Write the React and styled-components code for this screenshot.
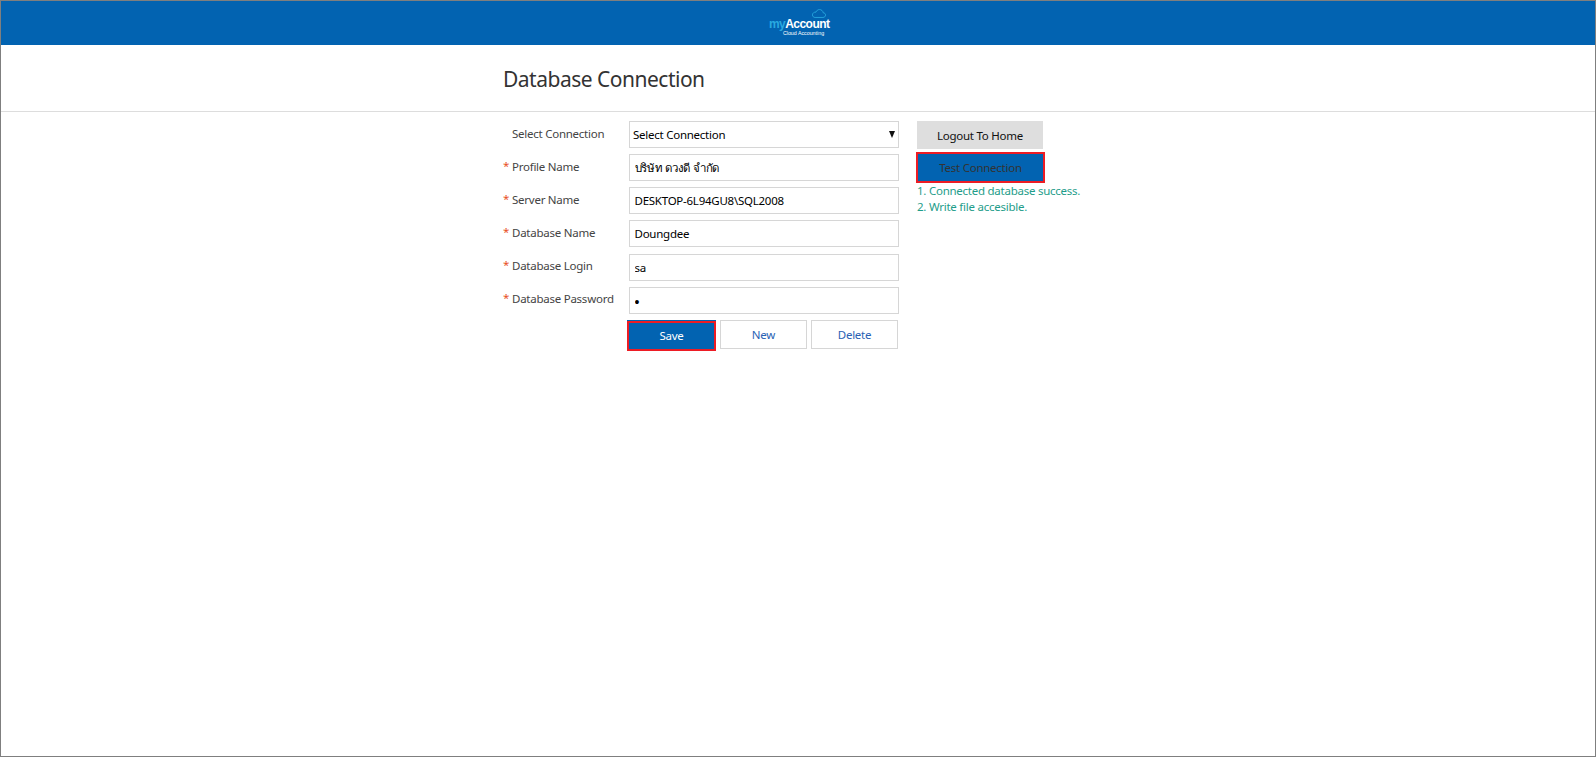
import React from 'react';
import styled, { createGlobalStyle } from 'styled-components';

const GlobalStyle = createGlobalStyle`
    html, body {
        margin: 0;
        padding: 0;
        background: #fff;
    }
    body {
        font-family: "Noto Sans", "Liberation Sans", Tahoma, sans-serif;
    }
`;

const fields = [
    { label: 'Profile Name', value: 'บริษัท ดวงดี จำกัด' },
    { label: 'Server Name', value: 'DESKTOP-6L94GU8\\SQL2008' },
    { label: 'Database Name', value: 'Doungdee' },
    { label: 'Database Login', value: 'sa' },
    { label: 'Database Password', value: 'a', type: 'password' },
];

const Logo = () => (
    <LogoBox>
        <svg width="14" height="9" viewBox="0 0 16 10" fill="none" stroke="#29a9e0" strokeWidth="1">
            <path d="M3.5 9.5H12.5C14.3 9.5 15.5 8.3 15.5 6.8C15.5 5.3 14.3 4.2 12.8 4.2C12.5 2 10.7 0.5 8.6 0.5C6.7 0.5 5.1 1.7 4.6 3.4C2.4 3.2 0.5 4.6 0.5 6.6C0.5 8.3 1.8 9.5 3.5 9.5Z" />
        </svg>
        <LogoName><span>my</span>Account</LogoName>
        <LogoSub>Cloud Accounting</LogoSub>
    </LogoBox>
);

const App = () => {
    return (
        <Frame>
            <GlobalStyle />
            <TopBar>
                <Logo />
            </TopBar>
            <TitleBar>
                <Title>Database Connection</Title>
            </TitleBar>
            <Content>
                <Form>
                    <Row>
                        <Label>Select Connection</Label>
                        <SelectWrap>
                            <Select defaultValue="">
                                <option value="">Select Connection</option>
                            </Select>
                            <Arrow />
                        </SelectWrap>
                    </Row>
                    {fields.map((f) => (
                        <Row key={f.label}>
                            <Label required>{f.label}</Label>
                            <Input type={f.type || 'text'} defaultValue={f.value} />
                        </Row>
                    ))}
                    <Actions>
                        <ActionButton primary marked>Save</ActionButton>
                        <ActionButton>New</ActionButton>
                        <ActionButton>Delete</ActionButton>
                    </Actions>
                </Form>
                <Side>
                    <LogoutButton>Logout To Home</LogoutButton>
                    <TestButton>Test Connection</TestButton>
                    <Messages>
                        <li>1. Connected database success.</li>
                        <li>2. Write file accesible.</li>
                    </Messages>
                </Side>
            </Content>
        </Frame>
    );
};

export default App;

const Frame = styled.div`
    box-sizing: border-box;
    height: 757px;
    border: 1px solid #7f7f7f;
    background: #fff;
    overflow: hidden;
`;

const TopBar = styled.header`
    height: 44px;
    background: #0263b1;
    display: flex;
    justify-content: center;
`;

const LogoBox = styled.div`
    position: relative;
    width: 60px;
    padding-top: 18px;
    margin-left: 2px;
    color: #fff;
    text-align: center;
    svg {
        position: absolute;
        top: 8px;
        right: 3px;
    }
`;

const LogoName = styled.div`
    font-family: "Liberation Sans", Arial, sans-serif;
    font-size: 12px;
    line-height: 11px;
    font-weight: 700;
    letter-spacing: -0.55px;
    white-space: nowrap;
    span {
        color: #29a9e0;
    }
`;

const LogoSub = styled.div`
    font-family: "Liberation Sans", Arial, sans-serif;
    font-size: 5.3px;
    line-height: 7px;
    padding-left: 9px;
    white-space: nowrap;
`;

const TitleBar = styled.div`
    height: 67px;
    box-sizing: border-box;
    border-bottom: 1px solid #dddddd;
    padding: 21px 0 0 502px;
`;

const Title = styled.h1`
    margin: 0;
    font-size: 21px;
    line-height: 26px;
    font-weight: 400;
    letter-spacing: -0.5px;
    color: #333333;
`;

const Content = styled.div`
    display: flex;
    padding: 9px 0 0 502px;
`;

const Form = styled.form`
    width: 396px;
    display: flex;
    flex-direction: column;
    gap: 6.15px;
`;

const Row = styled.div`
    display: flex;
    align-items: center;
    height: 27px;
`;

const Label = styled.label`
    position: relative;
    width: 126px;
    flex: none;
    box-sizing: border-box;
    padding: 0 0 3px 9px;
    font-size: 11.5px;
    letter-spacing: -0.25px;
    color: #444444;
    white-space: nowrap;
    &::before {
        content: ${(p) => (p.required ? '"*"' : 'none')};
        position: absolute;
        left: 0;
        top: -1px;
        color: #e8501f;
    }
`;

const fieldBox = `
    box-sizing: border-box;
    width: 270px;
    height: 27px;
    border: 1px solid #d6d6d6;
    background: #fff;
    outline: none;
    font-family: "Noto Sans", "Liberation Sans", Tahoma, sans-serif;
    font-size: 11.5px;
    letter-spacing: -0.25px;
    color: #000;
`;

const Input = styled.input`
    ${fieldBox}
    padding: 0 4.5px;
    &[type='password'] {
        padding-top: 3px;
        font-family: "Liberation Sans", Arial, sans-serif;
        font-size: 14px;
    }
`;

const SelectWrap = styled.div`
    position: relative;
    width: 270px;
    height: 27px;
`;

const Select = styled.select`
    ${fieldBox}
    appearance: none;
    padding: 0 3px;
    border-radius: 0;
`;

const Arrow = styled.span`
    position: absolute;
    right: 4px;
    top: 10px;
    width: 0;
    height: 0;
    border-left: 3.5px solid transparent;
    border-right: 3.5px solid transparent;
    border-top: 7px solid #111;
`;

const Actions = styled.div`
    display: flex;
    gap: 4px;
    margin-left: 124px;
    height: 31px;
`;

const ActionButton = styled.button.attrs({ type: 'button' })`
    box-sizing: border-box;
    width: ${(p) => (p.marked ? '89px' : '87px')};
    height: ${(p) => (p.marked ? '30px' : '29px')};
    margin-top: ${(p) => (p.marked ? '1px' : '0')};
    padding: 0;
    border: ${(p) => (p.marked ? '2px solid #ed1c24' : '1px solid #d6d6d6')};
    border-radius: 0;
    box-shadow: ${(p) => (p.marked ? '0 -1px 0 #0263b1' : 'none')};
    background: ${(p) => (p.primary ? '#0263b1' : '#fff')};
    color: ${(p) => (p.primary ? '#fff' : '#2a62b4')};
    font-family: inherit;
    font-size: 11.5px;
    letter-spacing: -0.25px;
    font-weight: 400;
`;

const Side = styled.div`
    margin-left: 18px;
    width: 180px;
    display: flex;
    flex-direction: column;
    align-items: flex-start;
`;

const LogoutButton = styled.button.attrs({ type: 'button' })`
    width: 126px;
    height: 28px;
    padding: 0;
    border: 0;
    background: #dedede;
    color: #111;
    font-family: inherit;
    font-size: 11.5px;
    letter-spacing: -0.25px;
`;

const TestButton = styled.button.attrs({ type: 'button' })`
    box-sizing: border-box;
    width: 129px;
    height: 31px;
    margin: 3px 0 0 -1px;
    padding: 0;
    border: 2px solid #ed1c24;
    background: #0263b1;
    color: #333333;
    font-family: inherit;
    font-size: 11.5px;
    letter-spacing: -0.25px;
`;

const Messages = styled.ul`
    list-style: none;
    margin: 0;
    padding: 0;
    font-size: 11.5px;
    letter-spacing: -0.25px;
    line-height: 16px;
    color: #1f9d8a;
    white-space: nowrap;
`;
